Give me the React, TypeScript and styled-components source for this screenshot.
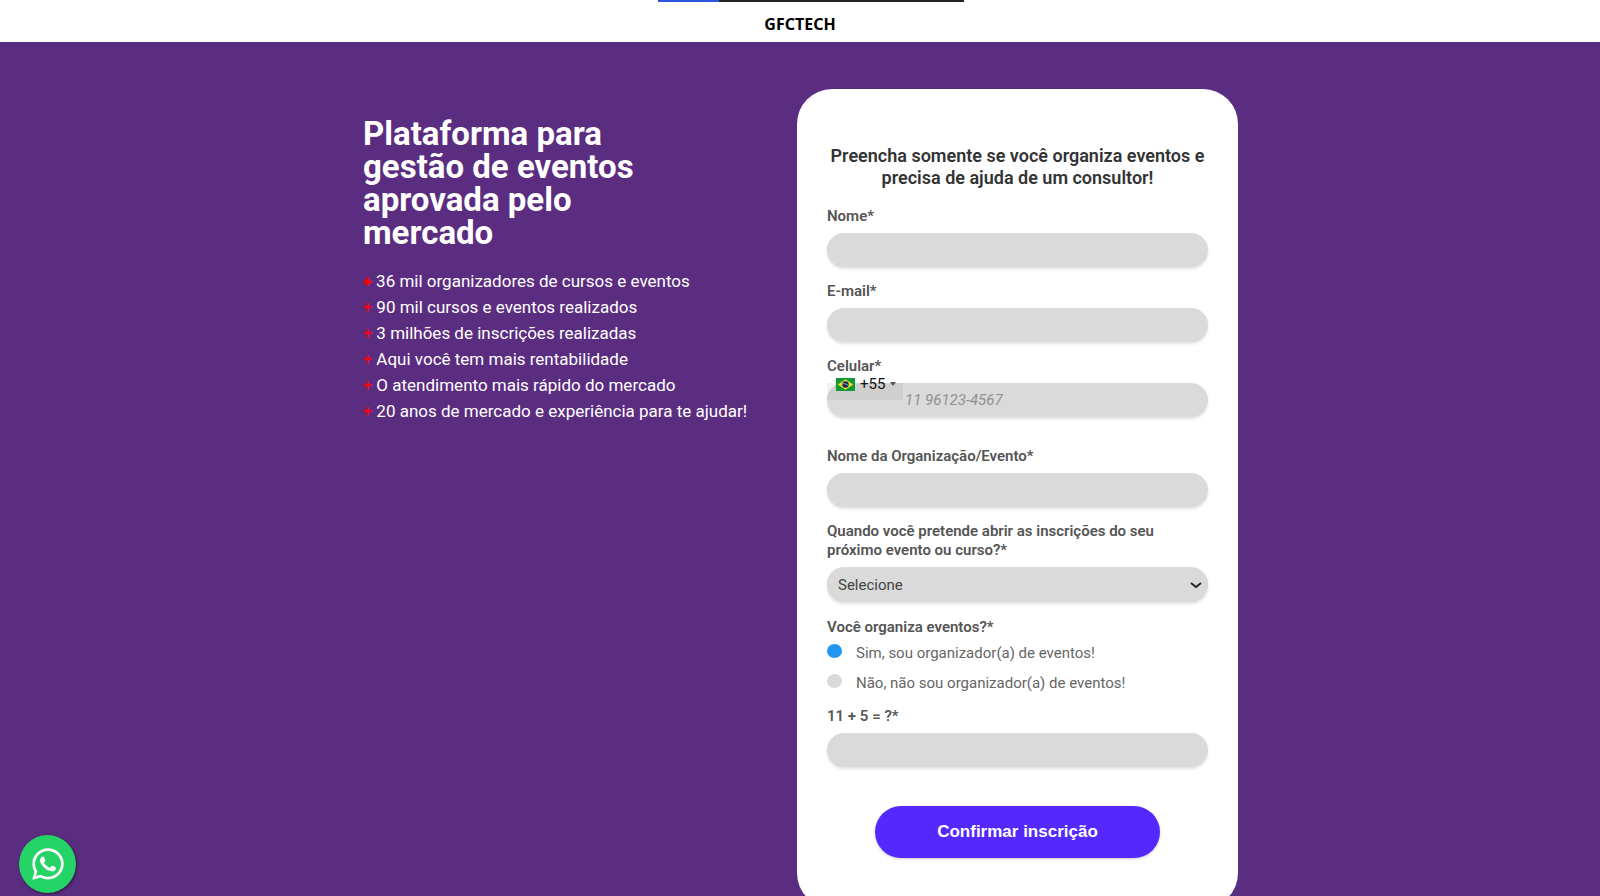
import React from "react";
import styled, { createGlobalStyle } from "styled-components";
import { FaWhatsapp } from "react-icons/fa";

const GlobalStyle = createGlobalStyle`
  *, *::before, *::after { box-sizing: border-box; }
  html { scrollbar-width: none; }
  body {
    margin: 0;
    background: #5b2d80;
    font-family: Roboto, "Liberation Sans", sans-serif;
    color: #555;
  }
`;

const Header = styled.header`
  display: flex;
  flex-direction: column;
  align-items: center;
  height: 42px;
  background: #fff;
`;

const Progress = styled.div`
  width: 306px;
  height: 2px;
  margin-left: 22px;
  background: #222;
`;

const ProgressFill = styled.div`
  width: 20%;
  height: 100%;
  background: #2f55e0;
`;

const Brand = styled.a`
  margin-top: 11px;
  font: 700 16px/22px "Noto Sans", sans-serif;
  color: #000;
  text-decoration: none;
`;

const Main = styled.main`
  display: flex;
  justify-content: center;
  align-items: flex-start;
  padding: 47px 0 40px;
`;

const Pitch = styled.section`
  width: 435px;
  padding: 28px 0 0 1px;
`;

const Title = styled.h1`
  width: 300px;
  margin: 0 0 19px;
  font-size: 33px;
  line-height: 33px;
  font-weight: 700;
  color: #fff;
`;

const Benefits = styled.ul`
  margin: 0;
  padding: 0;
  list-style: none;
  font-size: 17px;
  line-height: 26px;
  color: #fff;
`;

const Plus = styled.span<{ $strong?: boolean }>`
  margin-right: 4px;
  font-weight: ${(p) => (p.$strong ? 900 : 600)};
  color: ${(p) => (p.$strong ? "#f00" : "#e8081c")};
`;

const Card = styled.form`
  display: flex;
  flex-direction: column;
  width: 441px;
  padding: 56px 30px 50px;
  border-radius: 35px;
  background: #fff;
`;

const CardTitle = styled.h2`
  margin: 0 -4px 18px;
  font-size: 18px;
  line-height: 22px;
  font-weight: 600;
  text-align: center;
  color: #333;
`;

const Field = styled.div<{ $gap?: number }>`
  display: flex;
  flex-direction: column;
  gap: 7px;
  margin-bottom: ${(p) => p.$gap ?? 15}px;
`;

const Label = styled.label`
  font-size: 15px;
  line-height: 19px;
  font-weight: 600;
`;

const control = `
  width: 100%;
  height: 34px;
  border: 0;
  border-radius: 17px;
  background: #dadada;
  box-shadow: 0 2px 3px rgba(0, 0, 0, 0.12);
  font-family: inherit;
  font-size: 15px;
  color: #444;
  outline: none;
`;

const Input = styled.input`
  ${control}
  padding: 0 10px;
`;

const PhoneWrap = styled.div`
  position: relative;
`;

const PhoneInput = styled(Input)`
  display: block;
  padding-left: 78px;
  &::placeholder { color: #909090; font-style: italic; }
`;

const Country = styled.button`
  position: absolute;
  top: -15px;
  left: 0;
  display: flex;
  align-items: center;
  gap: 5px;
  width: 76px;
  height: 32px;
  padding: 0 0 0 9px;
  border: 0;
  background: linear-gradient(transparent 15px, rgba(0, 0, 0, 0.05) 15px);
  font: 400 15px/18px Roboto, sans-serif;
  color: #111;
`;

const Caret = styled.span`
  border: 3px solid transparent;
  border-top: 4px solid #555;
  border-bottom: 0;
`;

const SelectWrap = styled.div`
  display: grid;
  align-items: center;
  & > * { grid-area: 1 / 1; }
  & > svg { justify-self: end; margin-right: 6px; pointer-events: none; }
`;

const Select = styled.select`
  ${control}
  height: 35px;
  padding: 0 11px;
  appearance: none;
`;

const Choices = styled.fieldset`
  display: flex;
  flex-direction: column;
  margin: 0 0 10px;
  padding: 0;
  border: 0;
  font-size: 15px;
`;

const Legend = styled.legend`
  padding: 0;
  font-size: 15px;
  line-height: 19px;
  font-weight: 600;
`;

const Choice = styled.label`
  display: flex;
  align-items: flex-start;
  gap: 14px;
  height: 30px;
  padding-top: 7px;
  line-height: 19px;
  color: #666;
`;

const Radio = styled.input`
  width: 15px;
  height: 14px;
  margin: 0;
  border-radius: 50%;
  background: #dadada;
  appearance: none;
  &:checked { background: #2196f3; }
`;

const Submit = styled.button`
  align-self: center;
  width: 285px;
  height: 52px;
  margin-top: 24px;
  border: 0;
  border-radius: 26px;
  background: #5429ff;
  box-shadow: 0 1px 3px rgba(0, 0, 0, 0.2);
  font: 700 17px/20px "Liberation Sans", Arial, sans-serif;
  color: #fff;
`;

const WhatsApp = styled.a`
  position: fixed;
  left: 19px;
  bottom: 3px;
  display: flex;
  align-items: center;
  justify-content: center;
  width: 57px;
  height: 58px;
  border-radius: 50%;
  background: #25d366;
  box-shadow: 1px 1px 3px rgba(0, 0, 0, 0.5);
  font-size: 36px;
  color: #fff;
`;

const BENEFITS = [
  "36 mil organizadores de cursos e eventos",
  "90 mil cursos e eventos realizados",
  "3 milhões de inscrições realizadas",
  "Aqui você tem mais rentabilidade",
  "O atendimento mais rápido do mercado",
  "20 anos de mercado e experiência para te ajudar!",
];

const Flag = () => (
  <svg width="19" height="13" viewBox="0 0 19 13" aria-hidden="true">
    <rect width="19" height="13" fill="#119a34" />
    <path d="M9.5 1.3 17.3 6.5 9.5 11.7 1.7 6.5z" fill="#e8dc2a" />
    <circle cx="9.5" cy="6.5" r="3.2" fill="#1d2b57" />
    <path d="M6.6 5.6q3.2-.4 5.7 2" stroke="#cfd6e6" strokeWidth=".7" fill="none" />
  </svg>
);

export default function App() {
  return (
    <>
      <GlobalStyle />
      <Header>
        <Progress>
          <ProgressFill />
        </Progress>
        <Brand href="#">GFCTECH</Brand>
      </Header>
      <Main>
        <Pitch>
          <Title>Plataforma para gestão de eventos aprovada pelo mercado</Title>
          <Benefits>
            {BENEFITS.map((text, i) => (
              <li key={text}>
                <Plus $strong={i === 0}>+</Plus>
                {text}
              </li>
            ))}
          </Benefits>
        </Pitch>
        <Card onSubmit={(e) => e.preventDefault()}>
          <CardTitle>Preencha somente se você organiza eventos e precisa de ajuda de um consultor!</CardTitle>
          <Field>
            <Label htmlFor="nome">Nome*</Label>
            <Input id="nome" />
          </Field>
          <Field>
            <Label htmlFor="email">E-mail*</Label>
            <Input id="email" type="email" />
          </Field>
          <Field $gap={30}>
            <Label htmlFor="celular">Celular*</Label>
            <PhoneWrap>
              <PhoneInput id="celular" type="tel" placeholder="11 96123-4567" />
              <Country type="button">
                <Flag />
                +55
                <Caret />
              </Country>
            </PhoneWrap>
          </Field>
          <Field>
            <Label htmlFor="organizacao">Nome da Organização/Evento*</Label>
            <Input id="organizacao" />
          </Field>
          <Field $gap={16}>
            <Label htmlFor="quando">Quando você pretende abrir as inscrições do seu próximo evento ou curso?*</Label>
            <SelectWrap>
              <Select id="quando">
                <option>Selecione</option>
              </Select>
              <svg width="12" height="8" viewBox="0 0 12 8" fill="none" aria-hidden="true">
                <path d="M1 2l5 4 5-4" stroke="#222" strokeWidth="1.8" />
              </svg>
            </SelectWrap>
          </Field>
          <Choices>
            <Legend>Você organiza eventos?*</Legend>
            <Choice>
              <Radio type="radio" name="organiza" defaultChecked />
              Sim, sou organizador(a) de eventos!
            </Choice>
            <Choice>
              <Radio type="radio" name="organiza" />
              Não, não sou organizador(a) de eventos!
            </Choice>
          </Choices>
          <Field>
            <Label htmlFor="soma">11 + 5 = ?*</Label>
            <Input id="soma" />
          </Field>
          <Submit type="submit">Confirmar inscrição</Submit>
        </Card>
      </Main>
      <WhatsApp href="#" aria-label="WhatsApp">
        <FaWhatsapp />
      </WhatsApp>
    </>
  );
}
